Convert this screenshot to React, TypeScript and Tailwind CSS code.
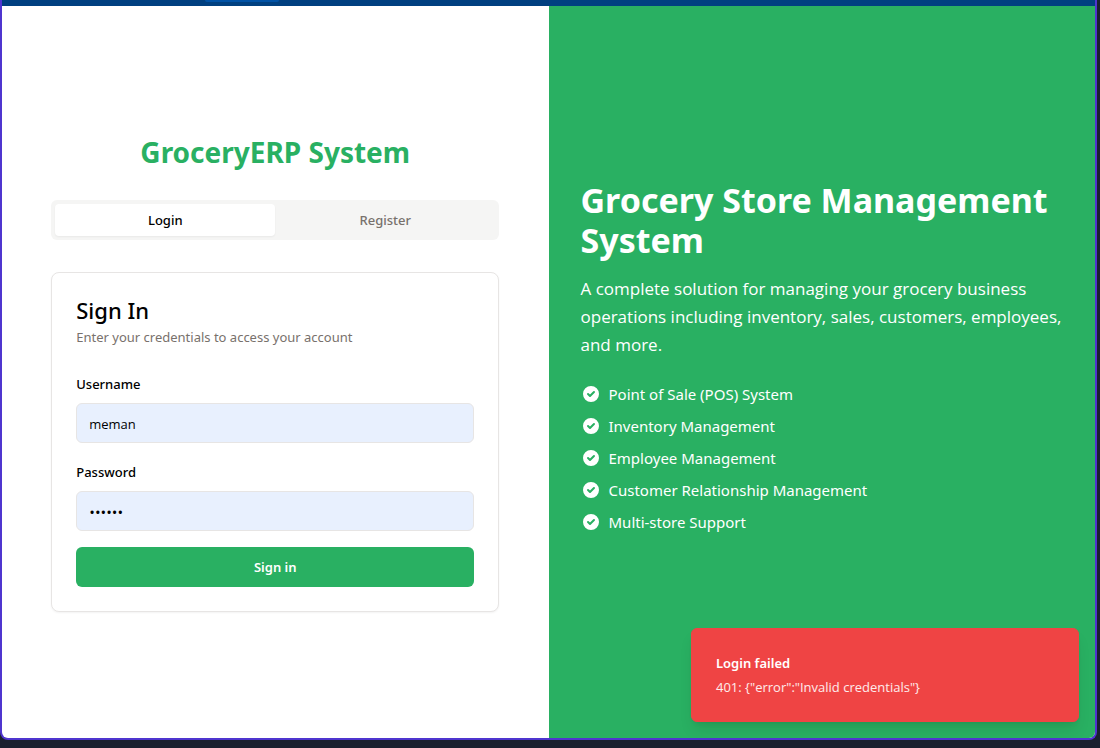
import { useState } from "react";

const features = [
  "Point of Sale (POS) System",
  "Inventory Management",
  "Employee Management",
  "Customer Relationship Management",
  "Multi-store Support",
];

const inputClass =
  "block h-10 w-full rounded-md border border-[#e7e5e4] bg-[#e8f0fe] px-3 pt-0.5 font-['Open_Sans',sans-serif] text-black outline-none";

const labelClass = "text-[13px] leading-[26px] font-medium";

function CheckCircle() {
  return (
    <svg viewBox="0 0 20 20" fill="currentColor" className="size-5" aria-hidden="true">
      <path
        fillRule="evenodd"
        clipRule="evenodd"
        d="M10 18a8 8 0 100-16 8 8 0 000 16zm3.707-9.293a1 1 0 00-1.414-1.414L9 10.586 7.707 9.293a1 1 0 00-1.414 1.414l2 2a1 1 0 001.414 0l4-4z"
      />
    </svg>
  );
}

function LoginCard() {
  const [username, setUsername] = useState("meman");
  const [password, setPassword] = useState("secret");

  return (
    <section className="rounded-lg border border-[#e7e5e4] bg-white p-6 shadow-xs">
      <h2 className="text-[22px] leading-[26px] font-medium text-black">Sign In</h2>
      <p className="mt-1 text-[13px] leading-5 text-[#78716c]">
        Enter your credentials to access your account
      </p>
      <form className="mt-6 flex flex-col gap-4" onSubmit={(e) => e.preventDefault()}>
        <div className="flex flex-col gap-1.5">
          <label htmlFor="username" className={labelClass}>
            Username
          </label>
          <input
            id="username"
            className={`${inputClass} text-[13px]`}
            value={username}
            onChange={(e) => setUsername(e.target.value)}
          />
        </div>
        <div className="flex flex-col gap-1.5">
          <label htmlFor="password" className={labelClass}>
            Password
          </label>
          <input
            id="password"
            type="password"
            className={`${inputClass} text-[15px]`}
            value={password}
            onChange={(e) => setPassword(e.target.value)}
          />
        </div>
        <button
          type="submit"
          className="h-10 rounded-md bg-[#29b062] pt-0.5 text-[13px] font-semibold text-white"
        >
          Sign in
        </button>
      </form>
    </section>
  );
}

function Toast() {
  return (
    <div
      role="alert"
      className="absolute right-4 bottom-4 w-[388px] rounded-md border border-[#ef4444] bg-[#ef4444] p-6 text-[13px] leading-5 text-white shadow-lg"
    >
      <div className="font-semibold">Login failed</div>
      <div className="mt-1 font-['Open_Sans',sans-serif] text-white/90">
        {'401: {"error":"Invalid credentials"}'}
      </div>
    </div>
  );
}

export default function App() {
  return (
    <div className="flex h-screen flex-col bg-[#1a202e] pr-[3px] pb-2 font-['Noto_Sans',sans-serif] text-black">
      <div className="relative flex flex-1 flex-col overflow-hidden rounded-b-lg border-x-2 border-b-2 border-[#4f35cf] bg-white">
        <div className="h-1.5 bg-[#004080]">
          <div className="ml-[203px] h-0.5 w-[74px] rounded-b-sm bg-[#0052a5]" />
        </div>
        <div className="grid flex-1 grid-cols-2">
          <main className="flex items-center justify-center p-8">
            <div className="w-full max-w-md">
              <h1 className="mb-7 text-center text-[28px] leading-10 font-bold text-[#29b062]">
                GroceryERP System
              </h1>
              <div
                role="tablist"
                className="mb-8 grid h-10 grid-cols-2 rounded-md bg-[#f5f5f4] p-1 text-[13px] font-medium"
              >
                <button
                  role="tab"
                  aria-selected="true"
                  className="rounded-sm bg-white pt-0.5 shadow-xs"
                >
                  Login
                </button>
                <button role="tab" aria-selected="false" className="pt-0.5 text-[#78716c]">
                  Register
                </button>
              </div>
              <LoginCard />
            </div>
          </main>
          <aside className="flex flex-col justify-center bg-[#29b062] px-8 pb-[30px] text-white">
            <h2 className="mb-[15px] text-[34px] leading-10 font-bold">
              Grocery Store Management System
            </h2>
            <p className="mb-[23px] font-['Open_Sans',sans-serif] text-[17px] leading-7">
              A complete solution for managing your grocery business operations including
              inventory, sales, customers, employees, and more.
            </p>
            <ul className="flex flex-col gap-2 text-[15px] leading-6">
              {features.map((feature) => (
                <li key={feature} className="flex items-center gap-2">
                  <CheckCircle />
                  {feature}
                </li>
              ))}
            </ul>
          </aside>
        </div>
        <Toast />
      </div>
    </div>
  );
}
